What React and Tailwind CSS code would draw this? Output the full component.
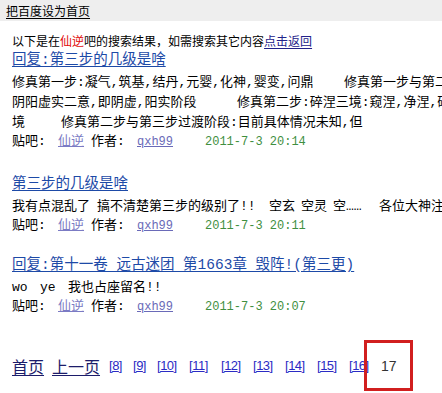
import React from "react";

const MIX = "font-['Liberation_Mono','Noto_Sans_CJK_SC',monospace]";
const CJK = "font-['Noto_Sans_CJK_SC',sans-serif]";

function Meta({ date }) {
  return (
    <div className={`flex h-[18px] items-center whitespace-nowrap text-[13px] leading-[18px] text-black ${MIX}`}>
      <span className="inline-block w-[46px] shrink-0">贴吧:</span>
      <span className="inline-block w-[33px] shrink-0">
        <span className="text-[#7b7bc4] underline">仙逆</span>
      </span>
      <span className="inline-block w-[46px] shrink-0">作者:</span>
      <span className="inline-block w-[68px] shrink-0">
        <span className="text-[12px] text-[#6a6ab8] underline">qxh99</span>
      </span>
      <span className="shrink-0 text-[12px] text-[#3f8f3f]">{date}</span>
    </div>
  );
}

function Title({ children }) {
  return (
    <div className={`h-[23px] whitespace-nowrap text-[14.5px] leading-[20px] ${MIX}`}>
      <span className="text-[#1d4aa7] underline underline-offset-2">{children}</span>
    </div>
  );
}

function Line({ children }) {
  return (
    <div className={`flex h-[20px] items-center whitespace-nowrap text-[13px] leading-[20px] text-black ${MIX}`}>
      {children}
    </div>
  );
}

export default function App() {
  return (
    <div className="relative h-[393px] w-[442px] overflow-hidden bg-white">
      <div className={`flex h-[21px] items-center bg-[#eeeeee] pl-[6px] text-[12px] text-black ${CJK}`}>
        <span className="underline underline-offset-2">把百度设为首页</span>
      </div>

      <div className="px-[12px]">
        <div className={`mt-[10px] h-[19px] whitespace-nowrap text-[12px] leading-[19px] text-black ${CJK}`}>
          以下是在<span className="text-[#e10a0a]">仙逆</span>吧的搜索结果，如需搜索其它内容
          <span className="text-[#22228a] underline underline-offset-2">点击返回</span>
        </div>

        {/* item 1 */}
        <div>
          <Title>回复:第三步的几级是啥</Title>
          <Line>
            <span className="inline-block w-[332px] shrink-0">修真第一步:凝气,筑基,结丹,元婴,化神,婴变,问鼎</span>
            <span className="shrink-0">修真第一步与第二</span>
          </Line>
          <Line>
            <span className="inline-block w-[225px] shrink-0">阴阳虚实二意,即阴虚,阳实阶段</span>
            <span className="shrink-0">修真第二步:碎涅三境:窥涅,净涅,碎</span>
          </Line>
          <Line>
            <span className="inline-block w-[49px] shrink-0">境</span>
            <span className="shrink-0">修真第二步与第三步过渡阶段:目前具体情况未知,但</span>
          </Line>
          <Meta date="2011-7-3 20:14" />
        </div>

        {/* item 2 */}
        <div className="mt-[23px]">
          <Title>第三步的几级是啥</Title>
          <Line>
            <span className="inline-block w-[85px] shrink-0">我有点混乱了</span>
            <span className="inline-block w-[172px] shrink-0">搞不清楚第三步的级别了!!</span>
            <span className="inline-block w-[32px] shrink-0">空玄</span>
            <span className="inline-block w-[32px] shrink-0">空灵</span>
            <span className="inline-block w-[46px] shrink-0">空……</span>
            <span className="shrink-0">各位大神注</span>
          </Line>
          <Meta date="2011-7-3 20:11" />
        </div>

        {/* item 3 */}
        <div className="mt-[20px]">
          <Title>回复:第十一卷 远古迷团 第1663章 毁阵!(第三更)</Title>
          <Line>
            <span className="inline-block w-[28px] shrink-0">wo</span>
            <span className="inline-block w-[28px] shrink-0">ye</span>
            <span className="shrink-0">我也占座留名!!</span>
          </Line>
          <Meta date="2011-7-3 20:07" />
        </div>

        {/* pagination */}
        <div className="mt-[40px] flex h-[20px] items-center whitespace-nowrap">
          <span className={`inline-block w-[40px] shrink-0 text-[16px] text-[#1c1c6a] ${CJK}`}>
            <span className="underline underline-offset-2">首页</span>
          </span>
          <span className={`inline-block w-[57px] shrink-0 text-[16px] text-[#1c1c6a] ${CJK}`}>
            <span className="underline underline-offset-2">上一页</span>
          </span>
          {[
            ["8", "w-[24px]"],
            ["9", "w-[24px]"],
            ["10", "w-[32px]"],
            ["11", "w-[32px]"],
            ["12", "w-[32px]"],
            ["13", "w-[32px]"],
            ["14", "w-[32px]"],
            ["15", "w-[32px]"],
            ["16", "w-[32px]"],
          ].map(([n, w]) => (
            <span key={n} className={`inline-block shrink-0 ${w} font-['Liberation_Sans',sans-serif] text-[13px] tracking-[-0.5px] text-[#2b2bc4]`}>
              <span className="underline">[{n}]</span>
            </span>
          ))}
          <span className="shrink-0 font-['Liberation_Sans',sans-serif] text-[14px] text-[#333333]">17</span>
        </div>
      </div>

      <div className="absolute left-[364px] top-[340px] h-[51px] w-[49px] border-[3px] border-[#d11f1f]" />
    </div>
  );
}
